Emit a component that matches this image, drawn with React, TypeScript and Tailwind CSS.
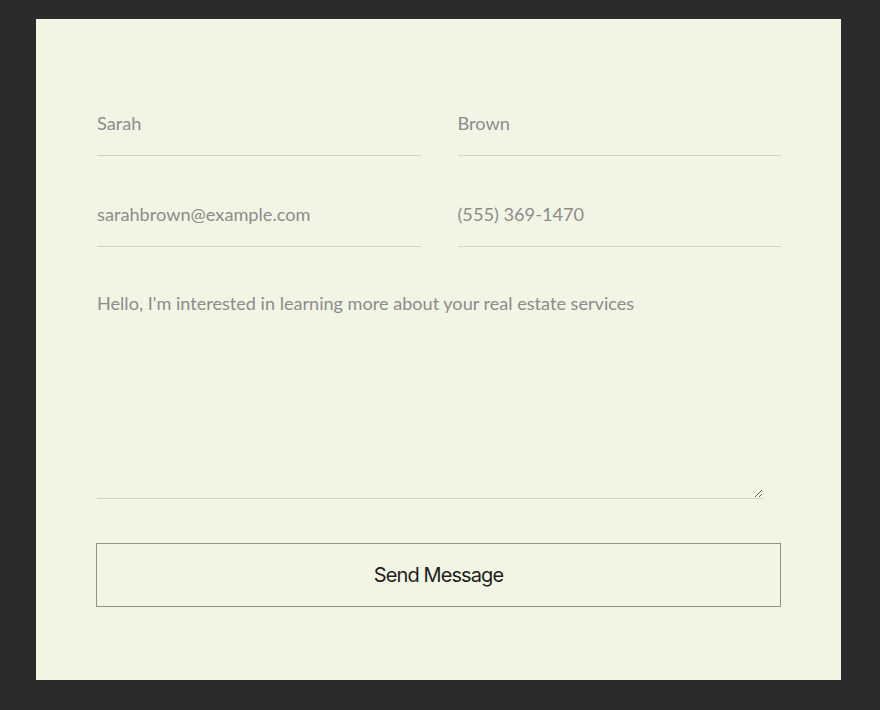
export default function App() {
  const field =
    "w-full h-[72px] pt-[7px] bg-transparent border-b border-[#d2d4c8] text-[18.2px] text-[#8c8c8c] outline-none font-['Lato',sans-serif]"

  return (
    <div className="min-h-[710px] w-full bg-[#2b2b2b] pt-[19px] pl-[36px]">
      <div className="w-[805px] h-[661px] bg-[#f2f5e4] pt-[65px] pl-[61px] pr-[60px]">
        <form className="flex flex-col" onSubmit={(e) => e.preventDefault()}>
          <div className="grid grid-cols-2 gap-x-[37px] gap-y-[19px]">
            <input className={field} defaultValue="Sarah" />
            <input className={field} defaultValue="Brown" />
            <input className={field} defaultValue="sarahbrown@example.com" />
            <input className={field} defaultValue="(555) 369-1470" />
          </div>
          <textarea
            className="mt-[19px] w-[666px] h-[233px] pt-[25px] bg-transparent border-b border-[#d2d4c8] text-[18.1px] leading-[24px] text-[#8c8c8c] outline-none font-['Lato',sans-serif]"
            defaultValue="Hello, I'm interested in learning more about your real estate services"
          />
          <button
            type="submit"
            className="mt-[44px] -ml-px w-[685px] h-[64px] border border-[#929288] text-[20px] tracking-[-0.9px] text-[#1e1e1e] font-['Inter',sans-serif]"
          >
            Send Message
          </button>
        </form>
      </div>
    </div>
  )
}
